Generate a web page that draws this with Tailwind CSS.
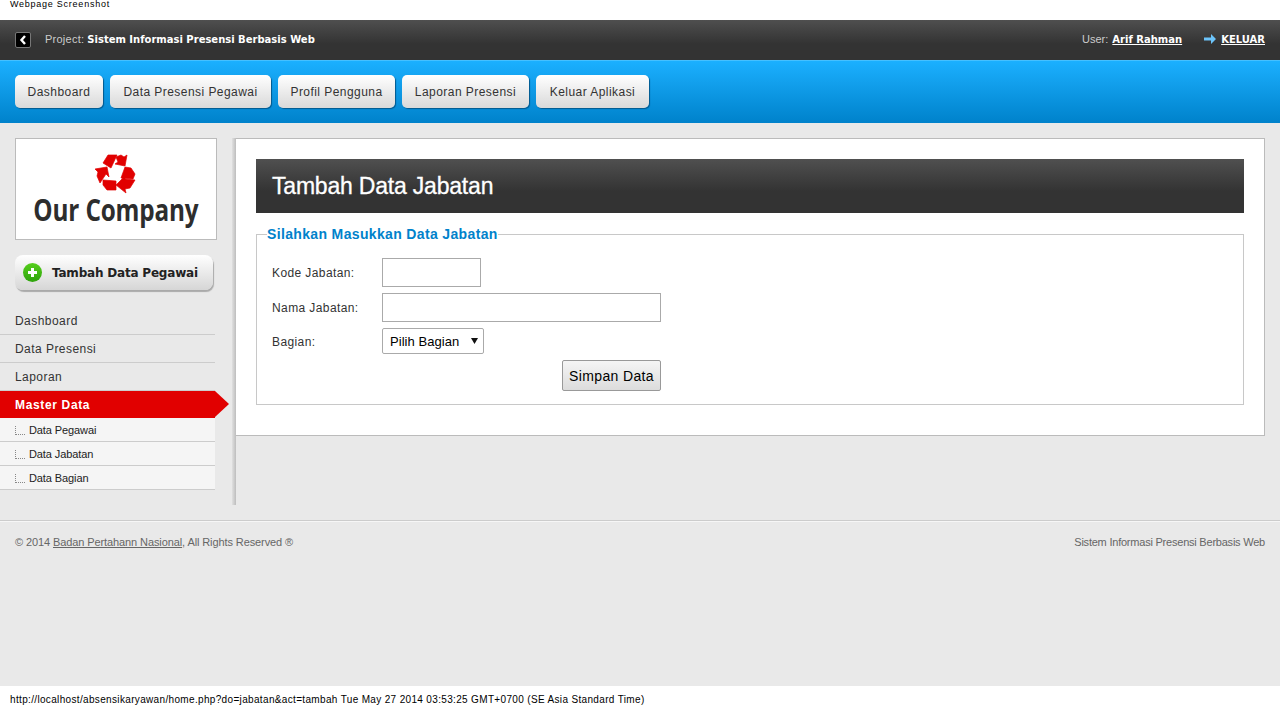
<!DOCTYPE html>
<html lang="id">
<head>
  <meta charset="UTF-8" />
  <title>Tambah Data Jabatan</title>
  <script src="https://cdn.jsdelivr.net/npm/@tailwindcss/browser@4"></script>
</head>
<body class="bg-[#e9e9e9] font-['Liberation_Sans',Arial,sans-serif] text-[12px] text-[#333] h-[706px] overflow-hidden flex flex-col">

  <!-- Screenshot header -->
  <div class="h-5 shrink-0 bg-white px-[10px] text-[9px] leading-[8px] tracking-[0.75px] text-black">Webpage Screenshot</div>

  <!-- Top bar -->
  <div class="h-10 shrink-0 bg-gradient-to-b from-[#4f4f4f] to-[#333333] to-60% px-[15px] flex items-center justify-between text-white">
    <div class="flex items-center">
      <a href="#" class="w-4 h-4 bg-black border border-[#777] rounded-[2px] flex items-center justify-center mr-[14px]">
        <svg width="8" height="10" viewBox="0 0 8 10"><path d="M6 1 2.5 5 6 9" fill="none" stroke="#fff" stroke-width="2.4"/></svg>
      </a>
      <span class="text-[#ccc] text-[11px] tracking-[0.25px] mr-[3px] -translate-y-px">Project:</span>
      <b class="font-['DejaVu_Sans'] text-[10px] -translate-y-px">Sistem Informasi Presensi Berbasis Web</b>
    </div>
    <div class="flex items-center">
      <span class="text-[#ccc] text-[11px] mr-1 -translate-y-px">User:</span>
      <a href="#" class="font-['DejaVu_Sans'] font-bold text-[10px] underline mr-[22px] -translate-y-px">Arif Rahman</a>
      <svg class="mr-[5px] -translate-y-px" width="12" height="10" viewBox="0 0 12 10"><path d="M0 3.5h7V0l5 5-5 5V6.5H0z" fill="#6cc4fa"/></svg>
      <a href="#" class="font-['DejaVu_Sans'] font-bold text-[10px] underline -translate-y-px">KELUAR</a>
    </div>
  </div>

  <!-- Main nav -->
  <nav class="h-[63px] shrink-0 border-t border-[#45c0ff] bg-gradient-to-b from-[#1bb0ff] to-[#0082cb] px-[15px] pt-[14px] flex gap-[7px] items-start">
    <a href="#" class="h-[33px] w-[88px] flex items-center justify-center rounded-[5px] bg-gradient-to-b from-white to-[#d9d9d9] shadow-[1px_1px_1px_#03588c] tracking-[0.45px]">Dashboard</a>
    <a href="#" class="h-[33px] w-[161px] flex items-center justify-center rounded-[5px] bg-gradient-to-b from-white to-[#d9d9d9] shadow-[1px_1px_1px_#03588c] tracking-[0.45px]">Data Presensi Pegawai</a>
    <a href="#" class="h-[33px] w-[117px] flex items-center justify-center rounded-[5px] bg-gradient-to-b from-white to-[#d9d9d9] shadow-[1px_1px_1px_#03588c] tracking-[0.45px]">Profil Pengguna</a>
    <a href="#" class="h-[33px] w-[127px] flex items-center justify-center rounded-[5px] bg-gradient-to-b from-white to-[#d9d9d9] shadow-[1px_1px_1px_#03588c] tracking-[0.45px]">Laporan Presensi</a>
    <a href="#" class="h-[33px] w-[113px] flex items-center justify-center rounded-[5px] bg-gradient-to-b from-white to-[#d9d9d9] shadow-[1px_1px_1px_#03588c] tracking-[0.45px]">Keluar Aplikasi</a>
  </nav>

  <!-- Content -->
  <div class="h-[397px] shrink-0 flex items-start pt-[15px]">
    <aside class="w-[232px] shrink-0">
      <div class="ml-[15px] w-[202px] h-[102px] bg-white border border-[#bbb] flex flex-col items-center pt-[11px]">
        <svg width="52" height="48" viewBox="0 0 52 48" fill="#e10000" stroke="#e10000" stroke-width="0.7">
          <path d="M13 13 18 5 27 5 21 18z"/>
          <path d="M26 7 31 5 34 7 37 5 35 16 25 14 28 12z"/>
          <path d="M5 19 17 17 19 27 16 24 10 33 7 26 8 22z"/>
          <path d="M13 30 26 31 26 40 17 40 13 35z"/>
          <path d="M35 17 41 18 45 24 43 29 31 28z"/>
          <path d="M26 35 35 26 35 29 45 30 40 38 35 39 36 43z"/>
        </svg>
        <span class="font-['Open_Sans'] font-bold text-[30px] leading-[30px] mt-[-3px] text-[#2d2d2d] tracking-[-0.2px] scale-x-[0.81] whitespace-nowrap">Our Company</span>
      </div>

      <a href="#" class="ml-[15px] mt-[15px] w-[198px] h-[35px] rounded-[8px] bg-gradient-to-b from-white to-[#d6d6d6] shadow-[1px_2px_1px_#aaa] flex items-center pl-2 font-['DejaVu_Sans'] font-bold text-[12px] tracking-[-0.2px] text-[#222]">
        <span class="w-[19px] h-[19px] rounded-full bg-gradient-to-b from-[#55cf1c] to-[#2ea30c] flex items-center justify-center mr-[10px]">
          <svg width="11" height="11" viewBox="0 0 11 11"><path d="M4 1h3v3h3v3H7v3H4V7H1V4h3z" fill="#fff"/></svg>
        </span>
        Tambah Data Pegawai
      </a>

      <ul class="mt-[17px] w-[215px] tracking-[0.45px]">
        <li class="h-[28px] border-b border-[#ccc] pl-[15px] pt-[5px]">Dashboard</li>
        <li class="h-[28px] border-b border-[#ccc] pl-[15px] pt-[5px]">Data Presensi</li>
        <li class="h-[28px] border-b border-[#ccc] pl-[15px] pt-[5px]">Laporan</li>
        <li class="relative h-[27px] bg-[#e10000] pl-[15px] flex items-center font-bold text-white tracking-[0.65px]">
          Master Data
          <span class="absolute left-full top-0 border-y-[13.5px] border-y-transparent border-l-[14px] border-l-[#e10000]"></span>
        </li>
        <li class="h-6 bg-[#f5f5f5] border-b border-[#ccc] pl-[15px] pt-px flex items-center text-[11px] text-[#222] tracking-[-0.1px]">
          <span class="w-[10px] h-[9px] border-l border-b border-dotted border-[#888] mr-[4px]"></span>Data Pegawai
        </li>
        <li class="h-6 bg-[#f5f5f5] border-b border-[#ccc] pl-[15px] pt-px flex items-center text-[11px] text-[#222] tracking-[-0.1px]">
          <span class="w-[10px] h-[9px] border-l border-b border-dotted border-[#888] mr-[4px]"></span>Data Jabatan
        </li>
        <li class="h-6 bg-[#f5f5f5] border-b border-[#ccc] pl-[15px] pt-px flex items-center text-[11px] text-[#222] tracking-[-0.1px]">
          <span class="w-[10px] h-[9px] border-l border-b border-dotted border-[#888] mr-[4px]"></span>Data Bagian
        </li>
      </ul>
    </aside>

    <div class="w-1 h-[367px] shrink-0 bg-gradient-to-r from-[#e0e0e0] to-[#bdbdbd]"></div>
    <main class="w-[1029px] h-[298px] bg-white border border-l-0 border-[#bbb] px-5 pt-5">
      <h1 class="h-[54px] pt-px bg-gradient-to-b from-[#505050] to-[#333333] to-60% text-white text-[23px] pl-4 flex items-center tracking-[-0.2px] [-webkit-text-stroke:0.3px_#fff]">Tambah Data Jabatan</h1>
      <fieldset class="mt-[13px] h-[179px] border border-[#c8c8c8] pl-[15px]">
        <legend class="text-[#0082cb] font-bold text-[14px] leading-[16px] tracking-[0.35px] ml-[-5px]">Silahkan Masukkan Data Jabatan</legend>
        <div class="grid grid-cols-[110px_1fr] items-center tracking-[0.4px] mt-4">
          <label>Kode Jabatan:</label>
          <input type="text" class="h-[29px] w-[99px] border border-[#aaa] bg-white" />
          <label class="mt-[6px]">Nama Jabatan:</label>
          <input type="text" class="mt-[6px] h-[29px] w-[279px] border border-[#aaa] bg-white" />
          <label class="mt-[7px]">Bagian:</label>
          <div class="mt-[6px] h-[26px] w-[102px] border border-[#aaa] rounded-[2px] bg-white flex items-center justify-between pt-px pl-[7px] pr-[5px] text-black text-[13px] tracking-[0.05px]">
            Pilih Bagian
            <svg class="-translate-y-px" width="7" height="7" viewBox="0 0 7 7"><path d="M0 1h7L3.5 7z" fill="#111"/></svg>
          </div>
          <div class="col-start-2 w-[279px] flex justify-end mt-[6px]">
            <button class="w-[99px] h-[31px] pt-px border border-[#999] rounded-[2px] bg-gradient-to-b from-[#f5f5f5] to-[#dcdcdc] text-[14px] text-black tracking-[0.35px]">Simpan Data</button>
          </div>
        </div>
      </fieldset>
    </main>
  </div>

  <!-- Footer -->
  <footer class="border-t border-[#ccc] shadow-[inset_0_1px_0_#f6f6f6] h-[166px] shrink-0 px-[15px] pt-[13px] flex justify-between items-start text-[11px] text-[#666]">
    <p class="tracking-[-0.1px]">© 2014 <a href="#" class="underline">Badan Pertahann Nasional</a>, All Rights Reserved ®</p>
    <p class="tracking-[-0.22px]">Sistem Informasi Presensi Berbasis Web</p>
  </footer>

  <!-- Screenshot URL -->
  <div class="flex-1 bg-white px-[10px] pt-[8px] text-[10px] leading-[12px] tracking-[0.34px] text-black">http://localhost/absensikaryawan/home.php?do=jabatan&amp;act=tambah Tue May 27 2014 03:53:25 GMT+0700 (SE Asia Standard Time)</div>

</body>
</html>
